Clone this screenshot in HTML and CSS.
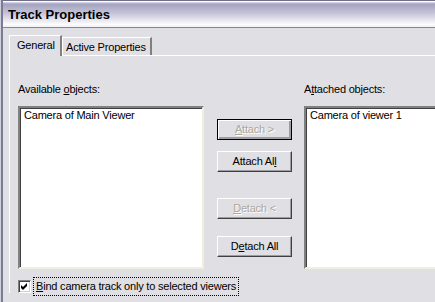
FILE: index.html
```html
<!DOCTYPE html>
<html lang="en">
<head>
    <meta charset="UTF-8">
    <title>Track Properties</title>
    <link rel="stylesheet" href="styles.css">
</head>
<body>
<div class="window">
    <div class="frame">
        <div class="titlebar">Track Properties</div>

        <div class="client">
            <div class="tabs">
                <div class="tab selected">General</div>
                <div class="tab">Active Properties</div>
            </div>

            <div class="panel">
                <div class="lists">
                    <div class="column left-col">
                        <div class="label">Available <u>o</u>bjects:</div>
                        <div class="listbox">
                            <div class="item">Camera of Main Viewer</div>
                        </div>
                    </div>

                    <div class="buttons">
                        <div class="btn default disabled attach"><u>A</u>ttach &gt;</div>
                        <div class="btn attach-all">Attach Al<u>l</u></div>
                        <div class="btn disabled detach"><u>D</u>etach &lt;</div>
                        <div class="btn detach-all">D<u>e</u>tach All</div>
                    </div>

                    <div class="column right-col">
                        <div class="label">A<u>t</u>tached objects:</div>
                        <div class="listbox">
                            <div class="item">Camera of viewer 1</div>
                        </div>
                    </div>
                </div>

                <div class="check-row">
                    <span class="checkbox">
                        <svg width="7" height="7" viewBox="0 0 7 7">
                            <path d="M0 2 L2 4 L6 0 L6 3 L2 7 L0 5 Z" fill="#000"/>
                        </svg>
                    </span>
                    <span class="focus"><u>B</u>ind camera track only to selected viewers</span>
                </div>
            </div>
        </div>
    </div>
</div>
</body>
</html>
```

FILE: styles.css
```css
body {
    margin: 0;
    width: 435px;
    height: 302px;
    overflow: hidden;
    background-color: #e0dfe3;
    font-family: "Liberation Sans", Arial, sans-serif;
    font-size: 11px;
    letter-spacing: -0.2px;
    color: #000;
}

.window {
    height: 302px;
    border-left: 1px solid #cfcfda;
}

.frame {
    height: 302px;
    border-left: 2px solid #7c7b96;
}

/* title bar, silver theme */
.titlebar {
    height: 25px;
    border-top: 1px solid #6f6e88;
    border-bottom: 1px solid #8483a0;
    box-shadow: inset 0 1px #ffffff, inset 0 -2px #f4f4f8;
    background: linear-gradient(to bottom, #ffffff 0px, #a4a3c0 3px, #c4c3d8 12px, #ffffff 24px);
    padding-left: 5px;
    font-size: 13px;
    font-weight: bold;
    letter-spacing: 0;
    line-height: 26px;
    padding-top: 1px;
}

.client {
    padding-left: 6px;
    padding-top: 7px;
}

.tabs {
    display: flex;
    align-items: flex-end;
    height: 20px;
}

.tab {
    box-sizing: border-box;
    height: 18px;
    line-height: 18px;
    border-top: 1px solid #ffffff;
    border-left: 1px solid #ffffff;
    border-right: 2px solid #808080;
}

.tab.selected {
    height: 21px;
    width: 53px;
    padding-left: 7px;
    position: relative;
    top: 1px;
    background-color: #e0dfe3;
    z-index: 1;
}

.tab:not(.selected) {
    width: 90px;
    padding-left: 3px;
}

.panel {
    border-top: 1px solid #ffffff;
    border-left: 1px solid #ffffff;
    padding: 27px 0 0 8px;
    height: 210px;
}

.lists {
    display: flex;
}

.column {
    display: flex;
    flex-direction: column;
    flex-shrink: 0;
}

.left-col {
    width: 186px;
}

.right-col {
    width: 150px;
    margin-left: 12px;
}

.label {
    height: 13px;
    line-height: 13px;
    margin-bottom: 10px;
}

.listbox {
    height: 157px;
    background-color: #ffffff;
    border-top: 2px solid #808080;
    border-left: 2px solid #808080;
    border-right: 2px solid #f1efe2;
    border-bottom: 2px solid #f1efe2;
    box-shadow: inset 1px 1px #404040;
    padding: 1px 4px;
}

.item {
    line-height: 13px;
}

.buttons {
    display: flex;
    flex-direction: column;
    flex-shrink: 0;
    width: 75px;
    margin-left: 13px;
}

.btn {
    box-sizing: border-box;
    height: 21px;
    line-height: 18px;
    text-align: center;
    background-color: #e0dfe3;
    border-top: 1px solid #ffffff;
    border-left: 1px solid #ffffff;
    border-right: 1px solid #404040;
    border-bottom: 1px solid #404040;
    box-shadow: inset -1px -1px #9d9da1;
}

.btn.default {
    border: 1px solid #000;
    box-shadow: inset 1px 1px #ffffff, inset -2px -2px #9d9da1;
}

.btn.disabled {
    color: #aca899;
    text-shadow: 1px 1px #ffffff;
}

.attach { margin-top: 36px; }
.attach-all { margin-top: 11px; }
.detach { margin-top: 26px; }
.detach-all { margin-top: 17px; }

.check-row {
    display: flex;
    align-items: center;
    margin-top: 8px;
}

.checkbox {
    box-sizing: border-box;
    width: 13px;
    height: 13px;
    background-color: #ffffff;
    border-top: 1px solid #808080;
    border-left: 1px solid #808080;
    border-right: 1px solid #ffffff;
    border-bottom: 1px solid #ffffff;
    box-shadow: inset 1px 1px #404040, inset -1px -1px #d4d0c8;
    display: flex;
    align-items: center;
    justify-content: center;
}

.focus {
    margin-left: 2px;
    border: 1px dotted #000;
    padding: 2px;
    line-height: 13px;
}
```
